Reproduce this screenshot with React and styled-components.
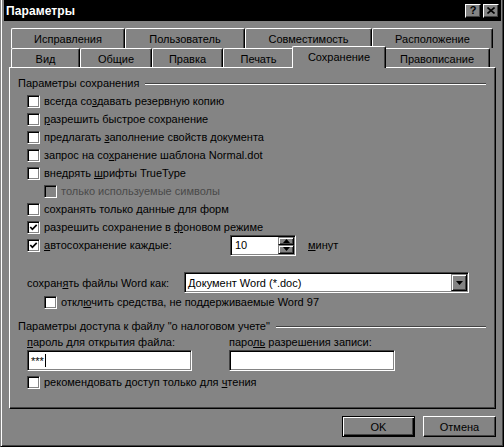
import React from "react";
import styled, { createGlobalStyle } from "styled-components";

const FACE = "#848484";
const SHADOW = "#424242";
const FONT = `"Liberation Sans", Arial, sans-serif`;

const Global = createGlobalStyle`
  html, body { margin: 0; padding: 0; background: ${FACE}; }
  body { font-family: ${FONT}; font-size: 11px; color: #000; }
  * { box-sizing: border-box; }
`;

const Window = styled.div`
  width: 504px;
  height: 447px;
  background: ${FACE};
  border-left: 1px solid ${FACE};
  border-right: 1px solid #000;
  border-bottom: 1px solid #000;
  box-shadow: inset 1px 0 0 #fff, inset -1px -1px 0 ${SHADOW};
  padding: 0 2px 2px 3px;
  display: flex;
  flex-direction: column;
  overflow: hidden;
`;

const TitleBar = styled.div`
  height: 21px;
  background: #000;
  display: flex;
  align-items: center;
  padding: 0 2px 0 2px;
  gap: 2px;
`;

const Title = styled.div`
  flex: 1;
  color: #fff;
  font-weight: bold;
  font-size: 12px;
  letter-spacing: 0.1px;
`;

const CapButton = styled.div`
  width: 16px;
  height: 14px;
  background: ${FACE};
  border: 1px solid;
  border-color: #fff #000 #000 #fff;
  box-shadow: inset -1px -1px 0 ${SHADOW};
  display: flex;
  align-items: center;
  justify-content: center;
  font-weight: bold;
  font-size: 11px;
  line-height: 1;
  padding-bottom: 1px;
`;

const Body = styled.div`
  flex: 1;
  display: flex;
  flex-direction: column;
  padding: 7px 5px 0 5px;
`;

const TabRow = styled.div`
  display: flex;
  height: ${(p) => p.$h}px;
  margin-left: 2px;
  align-items: flex-start;
`;

const Tab = styled.div`
  width: ${(p) => p.$w}px;
  height: ${(p) => (p.$active ? 22 : p.$h)}px;
  margin: 0 ${(p) => (p.$active ? -2 : 0)}px;
  position: relative;
  top: ${(p) => (p.$active ? -2 : 0)}px;
  z-index: ${(p) => (p.$active ? 2 : 1)};
  background: ${FACE};
  border-top: 1px solid #fff;
  border-left: 1px solid #fff;
  border-right: 1px solid #000;
  border-radius: 2px 2px 0 0;
  box-shadow: inset -1px 0 0 ${SHADOW};
  display: flex;
  justify-content: center;
  align-items: flex-start;
  padding-top: 4px;
  white-space: nowrap;
`;

const Panel = styled.div`
  height: 342px;
  border: 1px solid;
  border-color: #fff #000 #000 #fff;
  box-shadow: inset -1px -1px 0 ${SHADOW};
  padding: 6px 9px 0 8px;
  display: flex;
  flex-direction: column;
`;

const GroupHead = styled.div`
  height: 18px;
  display: flex;
  align-items: center;
  gap: 6px;
  margin-top: ${(p) => p.$mt || 0}px;
  white-space: nowrap;
`;

const EtchLine = styled.div`
  flex: 1;
  border-top: 1px solid ${SHADOW};
  border-bottom: 1px solid #fff;
  margin-top: 1px;
`;

const Group = styled.div`
  display: flex;
  flex-direction: column;
  padding-left: 9px;
`;

const Row = styled.div`
  height: ${(p) => p.$h || 18}px;
  display: flex;
  align-items: center;
  padding-left: ${(p) => p.$indent || 0}px;
  margin-top: ${(p) => p.$mt || 0}px;
  white-space: nowrap;
`;

const CheckItem = styled.label`
  display: flex;
  align-items: center;
  gap: 4px;
  width: ${(p) => (p.$w ? `${p.$w}px` : "auto")};
  color: ${(p) => (p.$disabled ? "#4a4a4a" : "#000")};
`;

const Box = styled.span`
  width: 13px;
  height: 13px;
  flex: none;
  background: ${(p) => (p.$disabled ? FACE : "#fff")};
  border: 1px solid;
  border-color: ${SHADOW} #fff #fff ${SHADOW};
  box-shadow: inset 1px 1px 0 #000, inset -1px -1px 0 ${FACE};
  display: flex;
  align-items: center;
  justify-content: center;
`;

const Sunken = styled.div`
  width: ${(p) => p.$w}px;
  height: 21px;
  flex: none;
  background: #fff;
  border: 1px solid;
  border-color: ${SHADOW} #fff #fff ${SHADOW};
  box-shadow: inset 1px 1px 0 #000, inset -1px -1px 0 ${FACE};
  display: flex;
  align-items: stretch;
  padding: 1px;
`;

const FieldText = styled.div`
  flex: 1;
  display: flex;
  align-items: center;
  padding-left: ${(p) => p.$pl || 2}px;
  white-space: nowrap;
`;

const Caret = styled.span`
  display: inline-block;
  width: 1px;
  height: 13px;
  background: #000;
  margin-left: 1px;
`;

const SpinCol = styled.div`
  width: 16px;
  display: flex;
  flex-direction: column;
`;

const Raised = styled.div`
  flex: ${(p) => (p.$grow ? 1 : "none")};
  width: 16px;
  background: ${FACE};
  border: 1px solid;
  border-color: ${FACE} #000 #000 ${FACE};
  box-shadow: inset 1px 1px 0 #fff, inset -1px -1px 0 ${SHADOW};
  display: flex;
  align-items: center;
  justify-content: center;
`;

const Unit = styled.span`
  margin-left: 12px;
`;

const FieldLabel = styled.span`
  width: ${(p) => p.$w}px;
  flex: none;
`;

const PassGrid = styled.div`
  display: grid;
  grid-template-columns: 165px 166px;
  column-gap: 37px;
`;

const PassCol = styled.div`
  display: flex;
  flex-direction: column;
  gap: 1px;
`;

const PassLabel = styled.div`
  height: 14px;
  line-height: 14px;
  white-space: nowrap;
`;

const ButtonRow = styled.div`
  display: flex;
  justify-content: flex-end;
  gap: 8px;
  margin-top: 7px;
`;

const Button = styled.div`
  width: 73px;
  height: 21px;
  background: ${FACE};
  border: 1px solid;
  border-color: ${(p) => (p.$default ? "#000" : "#fff #000 #000 #fff")};
  box-shadow: ${(p) =>
    p.$default
      ? `inset 1px 1px 0 #fff, inset -1px -1px 0 #000, inset -2px -2px 0 ${SHADOW}`
      : `inset -1px -1px 0 ${SHADOW}`};
  display: flex;
  align-items: center;
  justify-content: center;
`;

const Check = () => (
  <svg width="9" height="9" viewBox="0 0 9 9">
    <polyline points="1.3,4 3.4,6.3 7.7,1.8" fill="none" stroke="#000" strokeWidth="1.7" />
  </svg>
);

const Arrow = ({ up }) => (
  <svg width="7" height="4" viewBox="0 0 7 4">
    {up ? <polygon points="0,4 7,4 3.5,0" fill="#000" /> : <polygon points="0,0 7,0 3.5,4" fill="#000" />}
  </svg>
);

const CheckBox = ({ checked, disabled, children, w }) => (
  <CheckItem $disabled={disabled} $w={w}>
    <Box $disabled={disabled}>{checked && <Check />}</Box>
    <span>{children}</span>
  </CheckItem>
);

const row1 = [
  ["Исправления", 114],
  ["Пользователь", 120],
  ["Совместимость", 127],
  ["Расположение", 121],
];
const row2 = [
  ["Вид", 69],
  ["Общие", 72],
  ["Правка", 71],
  ["Печать", 71],
  ["Сохранение", 94, true],
  ["Правописание", 106],
];

const options = [
  { t: <>всегда со<u>з</u>давать резервную копию</> },
  { t: <><u>р</u>азрешить быстрое сохранение</> },
  { t: <>предлагать <u>з</u>аполнение свойств документа</> },
  { t: <>запрос на со<u>х</u>ранение шаблона Normal.dot</> },
  { t: <>внедрять <u>ш</u>рифты TrueType</> },
  { t: <>только используемые символы</>, disabled: true, indent: 17 },
  { t: <>сохранять только <u>д</u>анные для форм</> },
  { t: <>разрешить сохранение в <u>ф</u>оновом режиме</>, checked: true },
];

export default function App() {
  return (
    <>
      <Global />
      <Window>
        <TitleBar>
          <Title>Параметры</Title>
          <CapButton>?</CapButton>
          <CapButton>
            <svg width="8" height="7" viewBox="0 0 8 7">
              <path d="M0.5 0.5 L7.5 6.5 M7.5 0.5 L0.5 6.5" stroke="#000" strokeWidth="1.6" />
            </svg>
          </CapButton>
        </TitleBar>
        <Body>
          <TabRow $h={20}>
            {row1.map(([t, w]) => (
              <Tab key={t} $w={w} $h={20}>{t}</Tab>
            ))}
          </TabRow>
          <TabRow $h={19}>
            {row2.map(([t, w, a]) => (
              <Tab key={t} $w={w} $h={19} $active={a}>{t}</Tab>
            ))}
          </TabRow>
          <Panel>
            <GroupHead>
              <span>Параметры сохранения</span>
              <EtchLine />
            </GroupHead>
            <Group>
              {options.map((o, i) => (
                <Row key={i} $indent={o.indent}>
                  <CheckBox checked={o.checked} disabled={o.disabled}>{o.t}</CheckBox>
                </Row>
              ))}
              <Row>
                <CheckBox checked w={203}>
                  <u>а</u>втосохранение каждые:
                </CheckBox>
                <Sunken $w={66}>
                  <FieldText $pl={3}>10</FieldText>
                  <SpinCol>
                    <Raised $grow><Arrow up /></Raised>
                    <Raised $grow><Arrow /></Raised>
                  </SpinCol>
                </Sunken>
                <Unit><u>м</u>инут</Unit>
              </Row>
              <Row $h={21} $mt={18}>
                <FieldLabel $w={157}>сохран<u>я</u>ть файлы Word как:</FieldLabel>
                <Sunken $w={285}>
                  <FieldText $pl={2}>Документ Word (*.doc)</FieldText>
                  <Raised><Arrow /></Raised>
                </Sunken>
              </Row>
              <Row $indent={17}>
                <CheckBox>откл<u>ю</u>чить средства, не поддерживаемые Word 97</CheckBox>
              </Row>
            </Group>
            <GroupHead $mt={6}>
              <span>Параметры доступа к файлу "о налоговом учете"</span>
              <EtchLine />
            </GroupHead>
            <Group>
              <PassGrid>
                <PassCol>
                  <PassLabel><u>п</u>ароль для открытия файла:</PassLabel>
                  <Sunken $w={165}>
                    <FieldText $pl={2}>***<Caret /></FieldText>
                  </Sunken>
                </PassCol>
                <PassCol>
                  <PassLabel>паро<u>ль</u> разрешения записи:</PassLabel>
                  <Sunken $w={166}>
                    <FieldText />
                  </Sunken>
                </PassCol>
              </PassGrid>
              <Row $mt={2}>
                <CheckBox>рекомендовать доступ только для <u>ч</u>тения</CheckBox>
              </Row>
            </Group>
          </Panel>
          <ButtonRow>
            <Button $default>OK</Button>
            <Button>Отмена</Button>
          </ButtonRow>
        </Body>
      </Window>
    </>
  );
}
